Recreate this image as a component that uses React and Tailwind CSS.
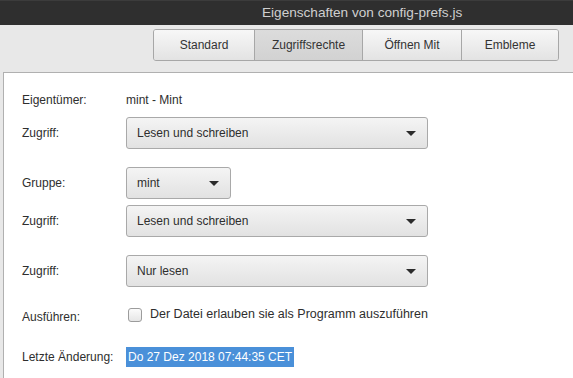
function Arrow() {
  return (
    <svg width="10" height="5" viewBox="0 0 10 5" className="shrink-0">
      <path d="M0 0H10L5 5Z" fill="#2b2b2b" />
    </svg>
  );
}

function Combo({ wide, text }) {
  return (
    <div
      className={
        (wide ? "w-[302px]" : "w-[105px]") +
        " h-[32px] rounded-[3px] border border-[#a9a9a9] bg-linear-to-b from-[#f4f4f4] to-[#e2e2e2] flex items-center justify-between pl-[10px] pr-[11px]"
      }
    >
      <span>{text}</span>
      <Arrow />
    </div>
  );
}

function Label({ children }) {
  return <div className="w-[104px] shrink-0">{children}</div>;
}

export default function App() {
  const tabs = [
    { t: "Standard", w: "w-[100px]" },
    { t: "Zugriffsrechte", w: "w-[108px]", active: true },
    { t: "Öffnen Mit", w: "w-[99px]" },
    { t: "Embleme", w: "w-[97px]" },
  ];
  return (
    <div className="w-[573px] h-[378px] overflow-hidden bg-[#e8e8e8] flex flex-col text-[12px] text-[#2e2e2e] font-['Liberation_Sans',Arial,sans-serif]">
      <div className="h-[25px] shrink-0 bg-[#2f2f2f] border-t border-[#3c3c3c] text-[#cfcfcf] text-[13.6px] pl-[262px] flex items-center">
        Eigenschaften von config-prefs.js
      </div>
      <div className="h-[47px] shrink-0 pt-[4px] pl-[153px]">
        <div className="flex h-[32px] w-max border border-[#a7a7a7] rounded-[3px] overflow-hidden">
          {tabs.map((tab, i) => (
            <div
              key={tab.t}
              className={
                tab.w +
                " flex items-center justify-center text-[#333] " +
                (i > 0 ? "border-l border-[#a7a7a7] " : "") +
                (tab.active
                  ? "bg-linear-to-b from-[#dcdcdc] to-[#d2d2d2]"
                  : "bg-linear-to-b from-[#f7f7f7] to-[#e3e3e3]")
              }
            >
              {tab.t}
            </div>
          ))}
        </div>
      </div>
      <div className="flex-1 ml-[3px] mr-[-20px] bg-white border-l border-t border-[#b0b0b0] pl-[18px] flex flex-col">
        <div className="mt-[17px] h-[20px] flex items-center">
          <Label>Eigentümer:</Label>
          <span>mint - Mint</span>
        </div>
        <div className="mt-[7px] flex items-center">
          <Label>Zugriff:</Label>
          <Combo wide text="Lesen und schreiben" />
        </div>
        <div className="mt-[18px] flex items-center">
          <Label>Gruppe:</Label>
          <Combo text="mint" />
        </div>
        <div className="mt-[6px] flex items-center">
          <Label>Zugriff:</Label>
          <Combo wide text="Lesen und schreiben" />
        </div>
        <div className="mt-[18px] flex items-center">
          <Label>Zugriff:</Label>
          <Combo wide text="Nur lesen" />
        </div>
        <div className="mt-[18px] h-[20px] flex items-center">
          <div className="w-[104px] shrink-0 mt-[3px]">Ausführen:</div>
          <div className="ml-[2px] w-[14px] h-[14px] rounded-[3px] border border-[#9c9c9c] bg-linear-to-b from-[#fbfbfb] to-[#e6e6e6]" />
          <span className="ml-[8px] -mt-[1px] text-[12.5px]">Der Datei erlauben sie als Programm auszuführen</span>
        </div>
        <div className="mt-[22px] h-[20px] flex items-center">
          <Label>Letzte Änderung:</Label>
          <span className="h-[20px] flex items-center bg-[#4a90d9] text-white px-[2px]">
            Do 27 Dez 2018 07:44:35 CET
          </span>
        </div>
      </div>
    </div>
  );
}
